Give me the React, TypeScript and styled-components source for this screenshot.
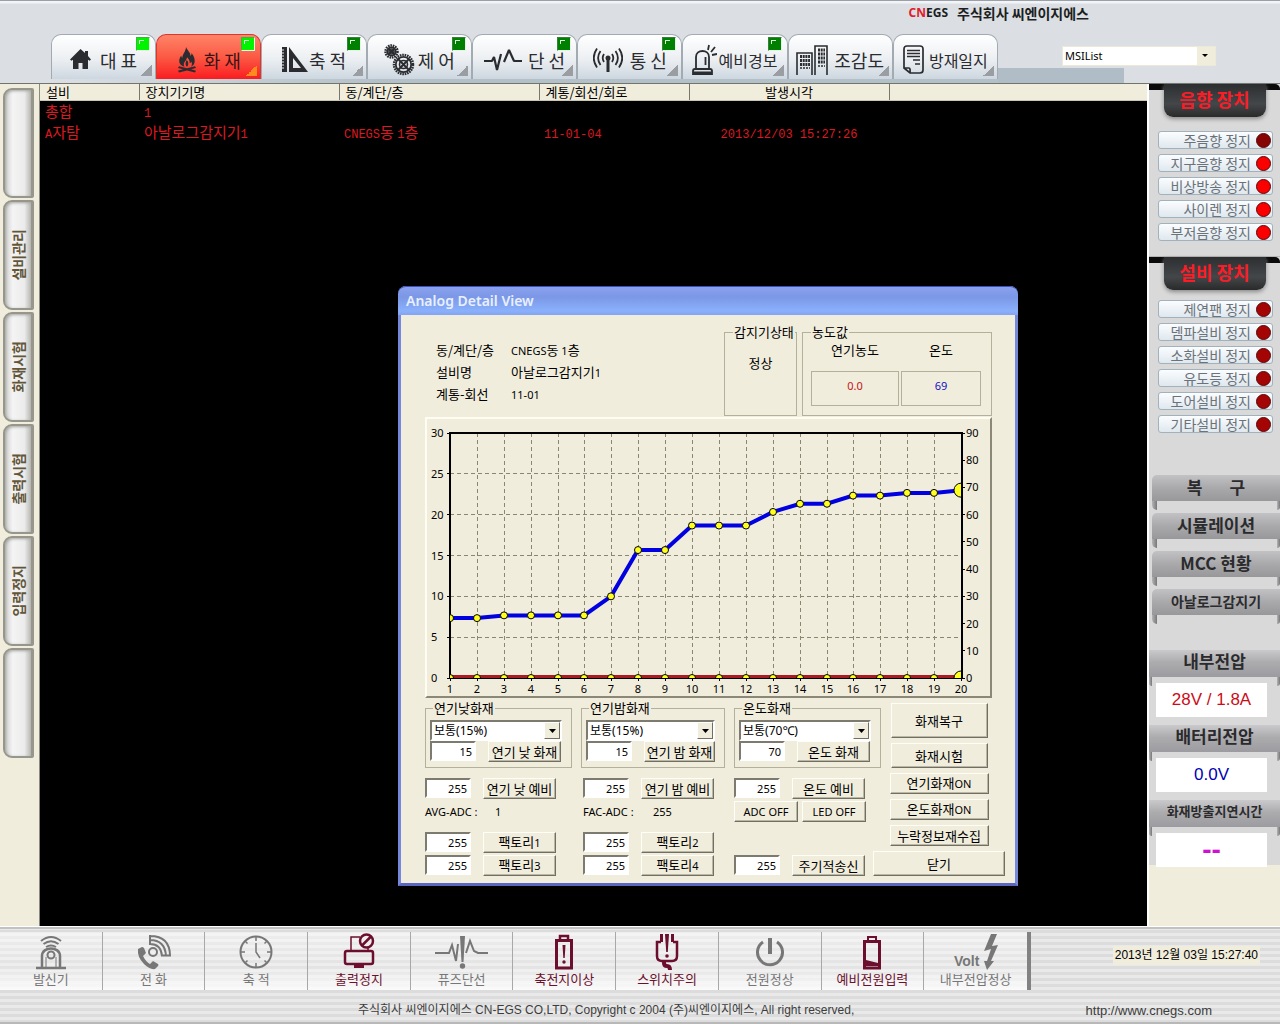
import React from "react";
import styled, { createGlobalStyle, css } from "styled-components";

const sans = `"Noto Sans", "Noto Sans CJK KR", sans-serif`;
const arial = `"Liberation Sans", "Noto Sans CJK KR", sans-serif`;
const korean = `"Noto Sans CJK KR", "Liberation Sans", sans-serif`;
const cream = "#f1eddc";
const ink = "#2a2c30";
const maroon = "#6c0f2e";
const dim = "#777777";

const GlobalStyle = createGlobalStyle`
  *, *::before, *::after { box-sizing: border-box; }
  body { margin: 0; background: ${cream}; font-family: ${sans}; font-size: 13px; color: #000; }
  button, input, select { font: inherit; color: inherit; margin: 0; }
  button { cursor: pointer; }
`;

const Page = styled.div`
  display: flex;
  flex-direction: column;
  min-height: 100vh;
  min-width: 1180px;
`;

/* ---------- header ---------- */

const Header = styled.header`
  background: linear-gradient(#9aa0aa 0 1px, #f2f4f6 1px 3px, #dbdfe3 4px, #dbdfe4);
  border-bottom: 1px solid #70756e;
`;

const Brand = styled.div`
  display: flex;
  justify-content: flex-end;
  gap: 9px;
  height: 34px;
  padding: 3px 191px 0 0;
  font: bold 14px/20px ${korean};
  color: #1c1e22;
`;

const BrandMark = styled.span`
  font-family: ${sans};
  font-size: 12px;
  em { color: #e0202c; font-style: normal; }
`;

const HeaderRow = styled.div`
  display: flex;
  padding-left: 51px;
`;

const TabBar = styled.nav`
  display: flex;
  width: 947px;
  padding-bottom: 4px;
  background: linear-gradient(to right, #dbdfe3, #b4c0c8 35%) bottom / 100% 4px no-repeat;
`;

const Tab = styled.button<{ $active?: boolean; $gap: number; $size: number }>`
  position: relative;
  flex: 1;
  display: flex;
  align-items: center;
  justify-content: center;
  gap: ${(p) => p.$gap}px;
  height: 45px;
  padding: 5px 0 0;
  border: 1px solid #a3abb2;
  border-bottom: 0;
  border-radius: 10px 10px 0 0;
  background: linear-gradient(#ffffff, #eceff2 55%, #cdd7e0);
  font: ${(p) => p.$size}px/22px ${korean};
  color: ${ink};
  white-space: pre;
  svg { flex: none; }
  &::after {
    content: "";
    position: absolute;
    right: 3px;
    bottom: 3px;
    width: 11px;
    height: 11px;
    background: linear-gradient(135deg, transparent 50%, #9a9ea2 50%);
  }
  ${(p) =>
    p.$active &&
    css`
      border-color: #e0342c;
      background: linear-gradient(#ff8468, #fb5a44 50%, #fa1c20);
      color: #3c1418;
      &::after { background: linear-gradient(135deg, transparent 50%, #ff8a20 50%); }
    `}
`;

const TabLamp = styled.i<{ $on: boolean }>`
  position: absolute;
  top: 2px;
  right: 5px;
  width: 14px;
  height: 14px;
  border: 1px solid ${(p) => (p.$on ? "#3cb43c" : "#3c7c3c")};
  border-right-color: #e4f4e4;
  border-bottom-color: #e4f4e4;
  background:
    linear-gradient(#d8ffd8, #d8ffd8) 2px 2px / 5px 1px no-repeat,
    linear-gradient(#d8ffd8, #d8ffd8) 2px 2px / 1px 4px no-repeat,
    ${(p) => (p.$on ? "#00f400" : "#008000")};
`;

const HeaderSide = styled.div`
  flex: 1;
  display: flex;
  justify-content: flex-end;
  align-items: flex-start;
  padding: 12px 64px 0 0;
  background: linear-gradient(#b0bdc7, #b0bdc7) left bottom / 126px 15px no-repeat;
`;

const FlatSelect = styled.span`
  display: grid;
  width: 154px;
  height: 20px;
  border: 1px solid #ece9d8;
  background: #fff;
  > * { grid-area: 1 / 1; }
  select {
    appearance: none;
    border: 0;
    background: transparent;
    padding: 0 20px 0 2px;
    font: 11px/18px ${sans};
    outline: none;
  }
  svg { justify-self: end; pointer-events: none; }
`;

/* ---------- body ---------- */

const Body = styled.div`
  flex: 1;
  display: flex;
`;

const SideNav = styled.nav`
  flex: none;
  display: flex;
  flex-direction: column;
  gap: 2px;
  width: 40px;
  padding: 4px 5px 0 3px;
  border-right: 1px solid #8a8a80;
  background: ${cream};
`;

const SideButton = styled.button`
  display: flex;
  align-items: center;
  justify-content: center;
  height: 110px;
  padding: 0;
  border: 2px solid #96968c;
  border-right-width: 3px;
  border-radius: 9px 2px 2px 9px;
  background: linear-gradient(to right, #d0d0d0, #f4f4f4 30%, #ebebeb 75%, #b8b8b4);
  box-shadow: inset 1px 1px 3px #a4a4a0;
  font: bold 14px/18px ${korean};
  color: #62563a;
  span {
    writing-mode: vertical-rl;
    text-orientation: sideways;
    transform: rotate(180deg);
  }
`;

const Main = styled.main`
  position: relative;
  flex: 1;
  background: #000;
`;

const EventTable = styled.table`
  width: 100%;
  table-layout: fixed;
  border-collapse: collapse;
  th {
    height: 16px;
    padding: 0 6px;
    border-right: 1px solid #77776c;
    border-bottom: 1px solid #c9c6b4;
    background: ${cream};
    font: 13px/15px ${korean};
    text-align: left;
  }
  th:last-child { border-right: 0; }
  th:nth-child(5), td:nth-child(5) { text-align: center; }
  td {
    height: 21px;
    padding: 0 5px;
    font: 15px/20px ${korean};
    color: #dc1820;
    white-space: nowrap;
  }
`;

const Col = styled.col<{ $w?: number }>`
  width: ${(p) => (p.$w ? `${p.$w}px` : "auto")};
`;

const Mono = styled.span`
  font-family: "Liberation Mono", monospace;
  font-size: 12px;
  line-height: 1;
`;

/* ---------- right panel ---------- */

const Aside = styled.aside`
  flex: none;
  width: 133px;
  border-left: 2px solid #fff;
  background: ${cream};
`;

const Panel = styled.div`
  height: 781px;
  background: #d9d9d9;
`;

const Group = styled.section`
  height: 173px;
  padding-bottom: 10px;
  border-bottom: 1px solid #b4b4b4;
`;

const GroupTop = styled.div<{ $height: number }>`
  display: flex;
  justify-content: center;
  height: ${(p) => p.$height}px;
  border-radius: 0 5px 0 0;
  background: linear-gradient(#0a0a0a, #0a0a0a) top / 100% 6px no-repeat;
  h2 {
    width: 102px;
    height: 33px;
    margin: 0;
    border-radius: 0 0 9px 9px;
    background: linear-gradient(#2c2e30, #44474a 60%, #2a2a2a);
    box-shadow: 0 2px 4px #8a8a8a;
    font: bold 18px/30px ${korean};
    color: #fb1c26;
    text-align: center;
  }
`;

const StopList = styled.div`
  display: flex;
  flex-direction: column;
  gap: 5px;
  padding: 0 7px 0 9px;
`;

const StopButton = styled.button<{ $lamp: string }>`
  display: flex;
  align-items: center;
  justify-content: flex-end;
  gap: 5px;
  height: 18px;
  padding: 0 1px 0 0;
  border: 1px solid #a2b2bd;
  border-radius: 3px;
  background: linear-gradient(#fbfdff, #dfe8ee);
  font: 14px/16px ${korean};
  color: #6b7279;
  &::after {
    content: "";
    width: 15px;
    height: 15px;
    border: 1px solid #5c0808;
    border-radius: 50%;
    background: ${(p) => p.$lamp};
  }
`;

const MetalList = styled.div`
  display: flex;
  flex-direction: column;
  gap: 12px;
  padding: 42px 0 0 3px;
`;

const tails = css<{ $tail: number }>`
  position: relative;
  &::before, &::after {
    content: "";
    position: absolute;
    top: 100%;
    left: 0;
    width: ${(p) => p.$tail}px;
    height: 9px;
    border-radius: 0 0 0 5px;
    background: linear-gradient(to right, #b4b4b6, #77777a);
  }
  &::after { left: auto; right: 0; width: 3px; border-radius: 0 0 5px 0; }
`;

const MetalButton = styled.button<{ $tail: number; $size: number }>`
  ${tails}
  height: 26px;
  padding: 0 0 2px;
  border: 0;
  border-radius: 5px 0 0 0;
  background: linear-gradient(#c2c2c4, #a9a9ac 50%, #98989b);
  font: bold ${(p) => p.$size}px/24px ${korean};
  color: #2b2b2d;
  white-space: pre;
`;

const Readings = styled.div`
  display: flex;
  flex-direction: column;
  gap: 8px;
  padding-top: 35px;
`;

const Reading = styled.section<{ $color: string; $size: number; $bold?: boolean }>`
  h3 {
    height: 27px;
    margin: 0;
    background: linear-gradient(#cacacc, #acacaf 45%, #9c9ca0);
    font: bold ${(p) => p.$size}px/22px ${korean};
    color: #2b2b2d;
    text-align: center;
  }
  output {
    display: block;
    height: 34px;
    margin: 6px 13px 0 7px;
    background: #fff;
    font: ${(p) => (p.$bold ? "bold 28px" : "17px")}/34px ${arial};
    color: ${(p) => p.$color};
    text-align: center;
  }
`;

const ReadingTitle = styled.h3<{ $tail: number }>`
  ${tails}
`;

/* ---------- dialog window ---------- */

const Window = styled.section`
  position: absolute;
  left: 358px;
  top: 202px;
  width: 620px;
  border: 3px solid #7489dc;
  border-top: 0;
  border-bottom-color: #5a66c0;
  border-radius: 8px 8px 0 0;
  background: ${cream};
`;

const TitleBar = styled.h1`
  height: 29px;
  margin: 0 -3px;
  padding: 0 8px;
  border-top: 1px solid #3c50b4;
  border-radius: 8px 8px 0 0;
  background: linear-gradient(#8ba2ee, #7b97e6 35%, #8ab0fc 85%, #84a4f0);
  font: 600 14px/28px ${sans};
  color: #e8f0ff;
`;

const WindowBody = styled.div`
  padding: 9px 10px 7px 24px;
`;

const Upper = styled.div`
  margin-right: 13px;
`;

const Summary = styled.div`
  display: flex;
  gap: 5px;
  height: 92px;
  margin-bottom: 1px;
`;

const Info = styled.dl`
  flex: 1;
  display: grid;
  grid-template-columns: 75px 1fr;
  grid-auto-rows: 22px;
  margin: 0;
  padding: 15px 0 0 11px;
  font: 13px/22px ${korean};
  dd { margin: 0; }
`;

const Sm = styled.span`
  font-family: ${sans};
  font-size: 11px;
`;

const Box = styled.fieldset<{ $width?: number }>`
  width: ${(p) => (p.$width ? `${p.$width}px` : "auto")};
  min-width: 0;
  margin: 0;
  padding: 0 8px;
  border: 1px solid #b3b09c;
  font: 13px/16px ${korean};
  legend {
    height: 16px;
    padding: 0 1px;
    white-space: nowrap;
  }
`;

const Status = styled.p`
  margin: 15px 0 0;
  text-align: center;
`;

const Gauges = styled.div`
  display: grid;
  grid-template-columns: 88px 80px;
  gap: 13px 2px;
  padding-top: 2px;
  text-align: center;
  output {
    height: 35px;
    border: 1px solid #b3b09c;
    font: 11px/27px ${sans};
  }
`;

const GaugeValue = styled.output<{ $color: string }>`
  color: ${(p) => p.$color};
`;

const ChartFrame = styled.div`
  border: 2px solid;
  border-color: #fffdf2 #8b8878 #8b8878 #fffdf2;
  svg { display: block; width: 100%; }
  text { font: 11px ${sans}; }
`;

const Lower = styled.div`
  display: flex;
  justify-content: space-between;
  padding-top: 2px;
`;

const Settings = styled.div`
  display: flex;
  flex-direction: column;
  gap: 10px;
`;

const Columns = styled.div<{ $cols: string }>`
  display: grid;
  grid-template-columns: ${(p) => p.$cols};
  gap: 2px 9px;
`;

const SettingBox = styled(Box)`
  padding: 4px 9px 5px 4px;
  legend { margin-left: 3px; }
`;

const Pair = styled.div<{ $gap: number }>`
  display: flex;
  gap: ${(p) => p.$gap}px;
`;

const DropDown = styled.span`
  display: grid;
  height: 21px;
  border: 2px solid;
  border-color: #7d7b70 #fff #fff #7d7b70;
  background: #fff;
  > * { grid-area: 1 / 1; }
  select {
    appearance: none;
    min-width: 0;
    border: 0;
    background: transparent;
    padding: 0 18px 0 2px;
    font: 12px/17px ${sans};
    outline: none;
  }
  i {
    justify-self: end;
    display: grid;
    place-items: center;
    width: 16px;
    border: 1px solid;
    border-color: #fff #716f64 #716f64 #fff;
    background: ${cream};
    pointer-events: none;
  }
`;

const NumberBox = styled.input`
  width: 46px;
  height: 20px;
  padding: 0 2px 0 0;
  border: 2px solid;
  border-color: #7d7b70 #fff #fff #7d7b70;
  background: #fff;
  font: 11px/16px ${sans};
  text-align: right;
`;

const PushButton = styled.button<{ $w?: number; $h?: number; $latin?: boolean }>`
  width: ${(p) => p.$w ?? 73}px;
  height: ${(p) => p.$h ?? 21}px;
  padding: 0;
  border: 1px solid;
  border-color: #fffef6 #716f64 #716f64 #fffef6;
  background: ${cream};
  box-shadow: inset -1px -1px 0 #bab7a4;
  font: ${(p) => (p.$latin ? `11px/16px ${sans}` : `13px/16px ${korean}`)};
  white-space: nowrap;
`;

const AdcText = styled.div`
  display: grid;
  grid-template-columns: 70px 1fr;
  font: 11px/21px ${sans};
`;

const Actions = styled.div`
  display: flex;
  flex-direction: column;
  align-items: center;
  gap: 5px;
  margin-left: -8px;
  padding-top: 3px;
`;

/* ---------- footer ---------- */

const Footer = styled.footer`
  border-top: 1px solid #fff;
  border-bottom: 2px solid #b8b8b8;
  background: repeating-linear-gradient(#e9e9e9 0 3px, #dcdcdc 3px 6px);
`;

const FooterRow = styled.div`
  display: flex;
  height: 67px;
  padding-top: 3px;
  border-top: 2px solid #c2c2c2;
`;

const Tools = styled.div`
  flex: 1;
  display: grid;
  grid-template-columns: repeat(10, 1fr);
  height: 58px;
  border-right: 4px solid #828282;
  background: linear-gradient(rgba(255, 255, 255, 0.5), rgba(255, 255, 255, 0.2) 60%, #fafafa);
`;

const Tool = styled.button<{ $alert?: boolean }>`
  display: flex;
  flex-direction: column;
  align-items: center;
  padding: 0;
  border: 0;
  border-right: 1px solid #a8a8a8;
  background: none;
  font: 13px/14px ${korean};
  color: ${(p) => (p.$alert ? maroon : dim)};
  svg { flex: none; }
  &:last-child { border-right: 0; }
`;

const ClockArea = styled.div`
  display: flex;
  justify-content: flex-end;
  align-items: flex-start;
  width: 249px;
  padding: 14px 20px 0 0;
  time {
    padding: 0 2px;
    background: ${cream};
    font: 12px/19px ${arial};
  }
`;

const Legal = styled.div`
  display: flex;
  justify-content: space-between;
  height: 28px;
  padding: 5px 68px 0 358px;
  font: 12px/23px ${arial};
  color: #3c3c3c;
  p { margin: 0; }
  a { color: inherit; text-decoration: none; font-size: 13px; }
`;

/* ---------- icons ---------- */

const HomeIcon = () => (
  <svg width="21" height="21" viewBox="0 0 21 21" fill={ink}>
    <path d="M10.500 0 15 4V2h3v5l3 3.500-1.400 1.200-1.600-.9V20h-5.500v-6h-4v6H3v-9.200l-1.600.9L0 10.500z" />
  </svg>
);

const FireIcon = () => (
  <svg width="20" height="26" viewBox="0 0 20 26" fill={ink}>
    <path d="M9 0c.8 3 4.500 5 4.500 9 .8-.8 1.200-1.800 1-3 2 2.500 3.500 5.500 3.200 8.500-.2 2.500-1.600 4.200-3.700 5.200 1.200-1.700 1.200-3.700.2-5.200-.3 1-.8 1.500-1.500 1.800.3-2.600-1.200-4.600-2.700-6-.2 2.900-3.200 4.700-3.200 7.200 0 .9.300 1.700.7 2.300C4 18.800 2 16.800 2.200 13.800c.1-2 1-3.600 2-5 .2 1 .5 1.700 1.200 2.200C5.200 7 9 4.500 9 0z" />
    <path d="M9.800 13c1.700 1.700 2.200 4.500.4 6.800-1.800-1-2.200-4-.4-6.800z" />
    <path d="m1 21 1-1.800 8 2 8-2L19 21l-5 1.300 5 1.400-1 1.800-8-2-8 2-1-1.800 5-1.400z" />
  </svg>
);

const RulerIcon = () => (
  <svg width="26" height="26" viewBox="0 0 26 26" fill={ink}>
    <path d="M0 0h5v25H0z" />
    <path d="M7 0l19 25H7zM11 11v10h8z" fillRule="evenodd" />
    <path d="M0 3h2M0 6h2M0 9h2M0 12h2M0 15h2M0 18h2M0 21h2" stroke="#eee" strokeWidth="1" />
  </svg>
);

const Gear = ({ x, y, r }: { x: number; y: number; r: number }) => (
  <g transform={`translate(${x} ${y})`} fill="none" stroke={ink}>
    <circle r={r} strokeWidth="2.500" strokeDasharray="1.600 .8" />
    <circle r={r - 1.8} strokeWidth="1.800" />
    <circle r={r * 0.42} strokeWidth="1.600" />
    <path d={`M${-r * 0.55} ${-r * 0.55}L${r * 0.55} ${r * 0.55}M${r * 0.55} ${-r * 0.55}L${-r * 0.55} ${r * 0.55}`} strokeWidth="2" />
  </g>
);

const GearsIcon = () => (
  <svg width="31" height="32" viewBox="0 0 31 32">
    <Gear x={7.500} y={7.500} r={6} />
    <Gear x={19.500} y={20.500} r={9.500} />
  </svg>
);

const PulseIcon = () => (
  <svg width="38" height="24" viewBox="0 0 38 24" fill="none" stroke={ink} strokeWidth="2.200" strokeLinejoin="bevel">
    <path d="M0 13h8l2-4 3 13 4-16M20 14l5-12 5 11h8" />
  </svg>
);

const AntennaIcon = () => (
  <svg width="30" height="26" viewBox="0 0 30 26" fill="none" stroke={ink} strokeWidth="1.800">
    <circle cx="15" cy="11" r="2.500" fill={ink} stroke="none" />
    <path d="M15 12v13" strokeWidth="3" />
    <path d="M11 7q-2.600 4 0 8M7.500 4q-4.800 7 0 14M4 1.500q-6.500 9.500 0 19M19 7q2.600 4 0 8M22.500 4q4.800 7 0 14M26 1.500q6.500 9.500 0 19" />
  </svg>
);

const SirenIcon = () => (
  <svg width="25" height="32" viewBox="0 0 25 32" fill="none" stroke={ink} strokeWidth="1.800">
    <path d="M4 25V13c0-8 13-8 13 0v12M1 30v-3q0-2 2-2h15q2 0 2 2v3zM1 28.500h19M13.500 13v8M16 6l1-5M19 8l4-5M20 11l5-1" />
  </svg>
);

const BuildingIcon = () => (
  <svg width="35" height="30" viewBox="0 0 35 30" fill="none" stroke={ink}>
    <path d="M1 30V8h15v22M19 30V1h12v29" strokeWidth="1.600" />
    <path d="M4 11.500h10M4 15.500h10M4 19.500h10M22 5h7M22 9h7M22 13h7M22 17h7" strokeWidth="3" strokeDasharray="2 .7" />
    <path d="M4 23h10M22 21h7" strokeWidth="1.400" strokeDasharray="2 1" />
  </svg>
);

const DocIcon = () => (
  <svg width="22" height="30" viewBox="0 0 22 30" fill="none" stroke={ink} strokeWidth="1.700">
    <path d="M7 28h10q3 0 3-3V4q0-3-3-3H4Q1 1 1 4v19zM1 23h5q1.500 0 1 5" />
    <path d="M4 5.500h13M4 8.500h13M4 11.500h13M10 15h7M12 19h5" />
  </svg>
);

const CallPointIcon = () => (
  <svg width="36" height="40" viewBox="0 0 36 40" fill="none" stroke={dim} strokeWidth="2">
    <path d="M3 36h30" strokeWidth="2.500" />
    <path d="M9 35V24c0-10 18-10 18 0v11" strokeWidth="2.500" />
    <circle cx="18" cy="23" r="3.500" />
    <path d="M8 9q10-8 20 0M10.500 12q7.500-5.500 15 0M13 15q5-3 10 0" />
    <path d="M13 35V25M23 35V25" strokeWidth="1" />
  </svg>
);

const PhoneIcon = () => (
  <svg width="36" height="40" viewBox="0 0 36 40" fill="none" stroke={dim} strokeWidth="2">
    <path d="M2 17l4-2q1 0 2 1l2 5-3 3q3 6 7 8l3-3 5 3q1 1 0 2l-3 3q-5 1-11-5Q1 25 2 17z" fill={dim} stroke="none" />
    <circle cx="17" cy="20" r="4" />
    <path d="M14 12q11 0 12 12M14 8q15 0 16 16M14 4q20 0 20 20M14 3v10M25 23.500h10" />
  </svg>
);

const ClockIcon = () => (
  <svg width="36" height="40" viewBox="0 0 36 40" fill="none" stroke={dim} strokeWidth="2">
    <circle cx="18" cy="20" r="15.500" />
    <path d="M18 11v9l4 6M18 5v4M18 31v4M3 20h4M29 20h4M7.500 9.500l2 2M26.500 28.500l2 2M28.500 9.500l-2 2M9.500 28.500l-2 2" strokeWidth="1.500" />
  </svg>
);

const OutputStopIcon = () => (
  <svg width="36" height="40" viewBox="0 0 36 40" fill="none" stroke={maroon} strokeWidth="2.500">
    <rect x="4" y="19" width="28" height="13" rx="2" />
    <path d="M13 33h10v3H13z" fill={maroon} stroke="none" />
    <path d="M10 18V5h9M27 15v3" strokeWidth="1.500" />
    <circle cx="25.500" cy="9" r="6.500" fill="#eee" />
    <path d="M21 13.500l9-9" />
  </svg>
);

const FuseIcon = () => (
  <svg width="54" height="40" viewBox="0 0 54 40" fill="none" stroke={dim} strokeWidth="2">
    <path d="M5 21h9l3-8 4 16 2-17M31 21l4-12 4 10 4 2h10M0 21h6" />
    <path d="M25 4h5l-1.500 26h-2z" fill={dim} stroke="none" />
    <circle cx="27.500" cy="34" r="2.700" fill={dim} stroke="none" />
  </svg>
);

const BatteryAlertIcon = () => (
  <svg width="36" height="40" viewBox="0 0 36 40" fill="none" stroke={maroon} strokeWidth="3">
    <path d="M10.500 8.500h15V36h-15z" />
    <path d="M14 7V4h8v3" strokeWidth="2.500" />
    <path d="M16.500 13h3l-.8 13h-1.400z" fill={maroon} stroke="none" />
    <circle cx="18" cy="30" r="1.700" fill={maroon} stroke="none" />
  </svg>
);

const PlugIcon = () => (
  <svg width="36" height="40" viewBox="0 0 36 40" fill="none" stroke={maroon} strokeWidth="2.500">
    <path d="M12 10H8v14q0 5 5 5h10q5 0 5-5V10h-4" />
    <path d="M12.500 2v8M23.500 2v8" strokeWidth="3" />
    <path d="M16 2h4l-1.200 18h-1.600z" fill={maroon} stroke="none" />
    <circle cx="18" cy="24" r="1.800" fill={maroon} stroke="none" />
    <path d="M15 29v2q0 3 3 3t3 4" strokeWidth="4" />
  </svg>
);

const PowerIcon = () => (
  <svg width="36" height="40" viewBox="0 0 36 40" fill="none" stroke={dim} strokeWidth="3">
    <path d="M11 10a12.500 12.500 0 1 0 14 0" />
    <path d="M18 6v16" strokeWidth="4" />
  </svg>
);

const BatteryLowIcon = () => (
  <svg width="36" height="40" viewBox="0 0 36 40" fill="none" stroke={maroon} strokeWidth="3">
    <path d="M10.500 9.500h15V36h-15z" />
    <path d="M14 8V5h8v3" strokeWidth="2" />
    <path d="M12 28l12 3v3H12z" fill={maroon} stroke="none" />
  </svg>
);

const VoltIcon = () => (
  <svg width="48" height="40" viewBox="0 0 48 40" fill={dim}>
    <text x="2" y="34" fontFamily="Liberation Sans" fontSize="14" fontWeight="bold">Volt</text>
    <path d="M39 2h6l-5 12 6-1-7 16h3l-7 9-3-9h3l4-12-7 2z" />
  </svg>
);

const Caret = ({ size = 7 }: { size?: number }) => (
  <svg width={size} height="4" viewBox="0 0 7 4">
    <path d="M0 0h7L3.500 4z" />
  </svg>
);

/* ---------- data ---------- */

const tabs = [
  { label: "대 표", icon: <HomeIcon />, gap: 9, size: 18, lamp: true },
  { label: "화 재", icon: <FireIcon />, gap: 7, size: 18, lamp: true, active: true },
  { label: "축 적", icon: <RulerIcon />, gap: 1, size: 18, lamp: false },
  { label: "제 어", icon: <GearsIcon />, gap: 3, size: 18, lamp: false },
  { label: "단 선", icon: <PulseIcon />, gap: 6, size: 18, lamp: false },
  { label: "통 신", icon: <AntennaIcon />, gap: 7, size: 18, lamp: false },
  { label: "예비경보", icon: <SirenIcon />, gap: 1, size: 16, lamp: false },
  { label: "조감도", icon: <BuildingIcon />, gap: 3, size: 18 },
  { label: "방재일지", icon: <DocIcon />, gap: 4, size: 16 },
];

const sideItems = ["", "설비관리", "화재시험", "출력시험", "입력정지", ""];

const soundStops: [string, string][] = [
  ["주음향 정지", "#860404"],
  ["지구음향 정지", "#fa0000"],
  ["비상방송 정지", "#fa0000"],
  ["사이렌 정지", "#fa0000"],
  ["부저음향 정지", "#fa0000"],
];

const facilityStops = ["제연팬 정지", "뎀파설비 정지", "소화설비 정지", "유도등 정지", "도어설비 정지", "기타설비 정지"];

const metalButtons: [string, number][] = [
  ["복       구", 17],
  ["시뮬레이션", 17],
  ["MCC 현황", 17],
  ["아날로그감지기", 14],
];

const readings = [
  { title: "내부전압", size: 17, value: "28V / 1.8A", color: "#cc0c18" },
  { title: "배터리전압", size: 17, value: "0.0V", color: "#0000b4" },
  { title: "화재방출지연시간", size: 13, value: "--", color: "#d010d0", bold: true },
];

const tools = [
  { label: "발신기", icon: <CallPointIcon /> },
  { label: "전 화", icon: <PhoneIcon /> },
  { label: "축 적", icon: <ClockIcon /> },
  { label: "출력정지", icon: <OutputStopIcon />, alert: true },
  { label: "퓨즈단선", icon: <FuseIcon /> },
  { label: "축전지이상", icon: <BatteryAlertIcon />, alert: true },
  { label: "스위치주의", icon: <PlugIcon />, alert: true },
  { label: "전원정상", icon: <PowerIcon /> },
  { label: "예비전원입력", icon: <BatteryLowIcon />, alert: true },
  { label: "내부전압정상", icon: <VoltIcon /> },
];

const levels = [
  { title: "연기낮화재", option: "보통(15%)", value: "15", button: "연기 낮 화재" },
  { title: "연기밤화재", option: "보통(15%)", value: "15", button: "연기 밤 화재" },
  { title: "온도화재", option: "보통(70℃)", value: "70", button: "온도 화재" },
];

const temperatures = [22, 22, 23, 23, 23, 23, 30, 47, 47, 56, 56, 56, 61, 64, 64, 67, 67, 68, 68, 69];

const plot = { left: 23, right: 535, top: 14, bottom: 259 };
const px = (i: number) => plot.left + Math.round((i * (plot.right - 1 - plot.left)) / 19);
const py = (v: number) => plot.bottom - (v * (plot.bottom - plot.top)) / 90;

function Chart() {
  const line = temperatures.map((t, i) => `${px(i)},${py(t)}`).join(" ");
  return (
    <ChartFrame>
      <svg viewBox="0 0 563 277" role="img" aria-label="연기농도 / 온도">
        <clipPath id="plot">
          <rect x={plot.left} y={plot.top} width={plot.right - plot.left} height={plot.bottom - plot.top} />
        </clipPath>
        <g stroke="#8a8672" strokeDasharray="4 3" shapeRendering="crispEdges">
          {temperatures.map((_, i) => (
            <line key={i} x1={px(i) + 0.5} x2={px(i) + 0.5} y1={plot.top} y2={plot.bottom} />
          ))}
          {[5, 10, 15, 20, 25].map((v) => (
            <line key={v} x1={plot.left} x2={plot.right} y1={py(v * 3)} y2={py(v * 3)} />
          ))}
        </g>
        <g stroke="#000" shapeRendering="crispEdges">
          {[0, 5, 10, 15, 20, 25, 30].map((v) => (
            <line key={v} x1={plot.left - 3} x2={plot.left} y1={py(v * 3)} y2={py(v * 3)} />
          ))}
          {[0, 10, 20, 30, 40, 50, 60, 70, 80, 90].map((v) => (
            <line key={v} x1={plot.right} x2={plot.right + 3} y1={py(v)} y2={py(v)} />
          ))}
          {temperatures.map((_, i) => (
            <line key={i} x1={px(i) + 0.5} x2={px(i) + 0.5} y1={plot.bottom} y2={plot.bottom + 3} />
          ))}
        </g>
        <rect
          x={plot.left}
          y={plot.top}
          width={plot.right - plot.left}
          height={plot.bottom - plot.top}
          fill="none"
          stroke="#000"
          strokeWidth="2"
          shapeRendering="crispEdges"
        />
        <g clipPath="url(#plot)">
          <polyline points={line} fill="none" stroke="#0000e0" strokeWidth="4" />
          <line x1={plot.left} x2={plot.right} y1={plot.bottom - 1} y2={plot.bottom - 1} stroke="#a81c24" strokeWidth="4" />
          <g fill="#ffff20" stroke="#000">
            {temperatures.map((t, i) => (
              <circle key={i} cx={px(i)} cy={py(t)} r={i === 19 ? 7 : 3.5} />
            ))}
            {temperatures.map((_, i) => (
              <circle key={i} cx={px(i)} cy={plot.bottom} r={i === 19 ? 7 : 3.5} />
            ))}
          </g>
        </g>
        <path d={`M${plot.right} ${plot.top}V${plot.bottom}`} stroke="#000" strokeWidth="2" />
        {[0, 5, 10, 15, 20, 25, 30].map((v) => (
          <text key={v} x="4" y={py(v * 3) + 4}>{v}</text>
        ))}
        {[0, 10, 20, 30, 40, 50, 60, 70, 80, 90].map((v) => (
          <text key={v} x="539" y={py(v) + 4}>{v}</text>
        ))}
        {temperatures.map((_, i) => (
          <text key={i} x={px(i)} y="274" textAnchor="middle">{i + 1}</text>
        ))}
      </svg>
    </ChartFrame>
  );
}

function ValuePair({ name, children }: { name: string; children: React.ReactNode }) {
  return (
    <Pair $gap={12}>
      <NumberBox aria-label={name} defaultValue="255" />
      <PushButton>{children}</PushButton>
    </Pair>
  );
}

function DetailWindow() {
  return (
    <Window role="dialog" aria-label="Analog Detail View">
      <TitleBar>Analog Detail View</TitleBar>
      <WindowBody>
        <Upper>
          <Summary>
            <Info>
              <dt>동/계단/층</dt>
              <dd><Sm>CNEGS</Sm>동 <Sm>1</Sm>층</dd>
              <dt>설비명</dt>
              <dd>아날로그감지기<Sm>1</Sm></dd>
              <dt>계통-회선</dt>
              <dd><Sm>11-01</Sm></dd>
            </Info>
            <Box $width={73}>
              <legend>감지기상태</legend>
              <Status>정상</Status>
            </Box>
            <Box $width={190}>
              <legend>농도값</legend>
              <Gauges>
                <span>연기농도</span>
                <span>온도</span>
                <GaugeValue $color="#c01818">0.0</GaugeValue>
                <GaugeValue $color="#1010c8">69</GaugeValue>
              </Gauges>
            </Box>
          </Summary>
          <Chart />
        </Upper>
        <Lower>
          <Settings>
            <Columns $cols="147px 144px 147px">
              {levels.map((l) => (
                <SettingBox key={l.title}>
                  <legend>{l.title}</legend>
                  <DropDown>
                    <select aria-label={l.title}>
                      <option>{l.option}</option>
                    </select>
                    <i><Caret /></i>
                  </DropDown>
                  <Pair $gap={12}>
                    <NumberBox aria-label={l.button} defaultValue={l.value} />
                    <PushButton>{l.button}</PushButton>
                  </Pair>
                </SettingBox>
              ))}
            </Columns>
            <Columns $cols="149px 142px 147px">
              <ValuePair name="연기 낮 예비">연기 낮 예비</ValuePair>
              <ValuePair name="연기 밤 예비">연기 밤 예비</ValuePair>
              <ValuePair name="온도 예비">온도 예비</ValuePair>
              <AdcText><span>AVG-ADC :</span><span>1</span></AdcText>
              <AdcText><span>FAC-ADC :</span><span>255</span></AdcText>
              <Pair $gap={4}>
                <PushButton $latin $w={64}>ADC OFF</PushButton>
                <PushButton $latin $w={64}>LED OFF</PushButton>
              </Pair>
            </Columns>
            <Columns $cols="149px 142px 147px">
              <ValuePair name="팩토리1">팩토리<Sm>1</Sm></ValuePair>
              <ValuePair name="팩토리2">팩토리<Sm>2</Sm></ValuePair>
              <span />
              <ValuePair name="팩토리3">팩토리<Sm>3</Sm></ValuePair>
              <ValuePair name="팩토리4">팩토리<Sm>4</Sm></ValuePair>
              <ValuePair name="주기적송신">주기적송신</ValuePair>
            </Columns>
          </Settings>
          <Actions>
            <PushButton $w={97} $h={35}>화재복구</PushButton>
            <PushButton $w={97} $h={25}>화재시험</PushButton>
            <PushButton $w={99}>연기화재<Sm>ON</Sm></PushButton>
            <PushButton $w={99}>온도화재<Sm>ON</Sm></PushButton>
            <PushButton $w={99}>누락정보재수집</PushButton>
            <PushButton $w={132} $h={25}>닫기</PushButton>
          </Actions>
        </Lower>
      </WindowBody>
    </Window>
  );
}

export default function App() {
  return (
    <Page>
      <GlobalStyle />
      <Header>
        <Brand>
          <BrandMark><em>CN</em>EGS</BrandMark>
          <span>주식회사 씨엔이지에스</span>
        </Brand>
        <HeaderRow>
          <TabBar>
            {tabs.map((t) => (
              <Tab key={t.label} $active={t.active} $gap={t.gap} $size={t.size}>
                {t.icon}
                <span>{t.label}</span>
                {t.lamp !== undefined && <TabLamp $on={t.lamp} />}
              </Tab>
            ))}
          </TabBar>
          <HeaderSide>
            <FlatSelect>
              <select aria-label="MSIList">
                <option>MSIList</option>
              </select>
              <svg width="20" height="18" viewBox="0 0 20 18">
                <path d="M2 0h18v18H2z" fill={cream} />
                <path d="M7 7h6l-3 3z" />
              </svg>
            </FlatSelect>
          </HeaderSide>
        </HeaderRow>
      </Header>

      <Body>
        <SideNav>
          {sideItems.map((label, i) => (
            <SideButton key={i} aria-label={label || "빈 메뉴"}>
              <span>{label}</span>
            </SideButton>
          ))}
        </SideNav>

        <Main>
          <EventTable>
            <colgroup>
              <Col $w={99} />
              <Col $w={200} />
              <Col $w={200} />
              <Col $w={150} />
              <Col $w={200} />
              <Col />
            </colgroup>
            <thead>
              <tr>
                <th>설비</th>
                <th>장치기기명</th>
                <th>동/계단/층</th>
                <th>계통/회선/회로</th>
                <th>발생시각</th>
                <th />
              </tr>
            </thead>
            <tbody>
              <tr>
                <td>총합</td>
                <td><Mono>1</Mono></td>
                <td /><td /><td /><td />
              </tr>
              <tr>
                <td><Mono>A</Mono>자탐</td>
                <td>아날로그감지기<Mono>1</Mono></td>
                <td><Mono>CNEGS</Mono>동 <Mono>1</Mono>층</td>
                <td><Mono>11-01-04</Mono></td>
                <td><Mono>2013/12/03 15:27:26</Mono></td>
                <td />
              </tr>
            </tbody>
          </EventTable>
          <DetailWindow />
        </Main>

        <Aside>
          <Panel>
            <Group>
              <GroupTop $height={47}><h2>음향 장치</h2></GroupTop>
              <StopList>
                {soundStops.map(([label, lamp]) => (
                  <StopButton key={label} $lamp={lamp}>{label}</StopButton>
                ))}
              </StopList>
            </Group>
            <GroupTop $height={43}><h2>설비 장치</h2></GroupTop>
            <StopList>
              {facilityStops.map((label) => (
                <StopButton key={label} $lamp="#a40404">{label}</StopButton>
              ))}
            </StopList>
            <MetalList>
              {metalButtons.map(([label, size]) => (
                <MetalButton key={label} $tail={5} $size={size}>{label}</MetalButton>
              ))}
            </MetalList>
            <Readings>
              {readings.map((r) => (
                <Reading key={r.title} $color={r.color} $size={r.size} $bold={r.bold}>
                  <ReadingTitle $tail={3}>{r.title}</ReadingTitle>
                  <output>{r.value}</output>
                </Reading>
              ))}
            </Readings>
          </Panel>
        </Aside>
      </Body>

      <Footer>
        <FooterRow>
          <Tools>
            {tools.map((t) => (
              <Tool key={t.label} $alert={t.alert}>
                {t.icon}
                <span>{t.label}</span>
              </Tool>
            ))}
          </Tools>
          <ClockArea>
            <time>2013년 12월 03일 15:27:40</time>
          </ClockArea>
        </FooterRow>
        <Legal>
          <p>주식회사 씨엔이지에스 CN-EGS CO,LTD, Copyright c 2004 (주)씨엔이지에스, All right reserved,</p>
          <a href="http://www.cnegs.com">http://www.cnegs.com</a>
        </Legal>
      </Footer>
    </Page>
  );
}
